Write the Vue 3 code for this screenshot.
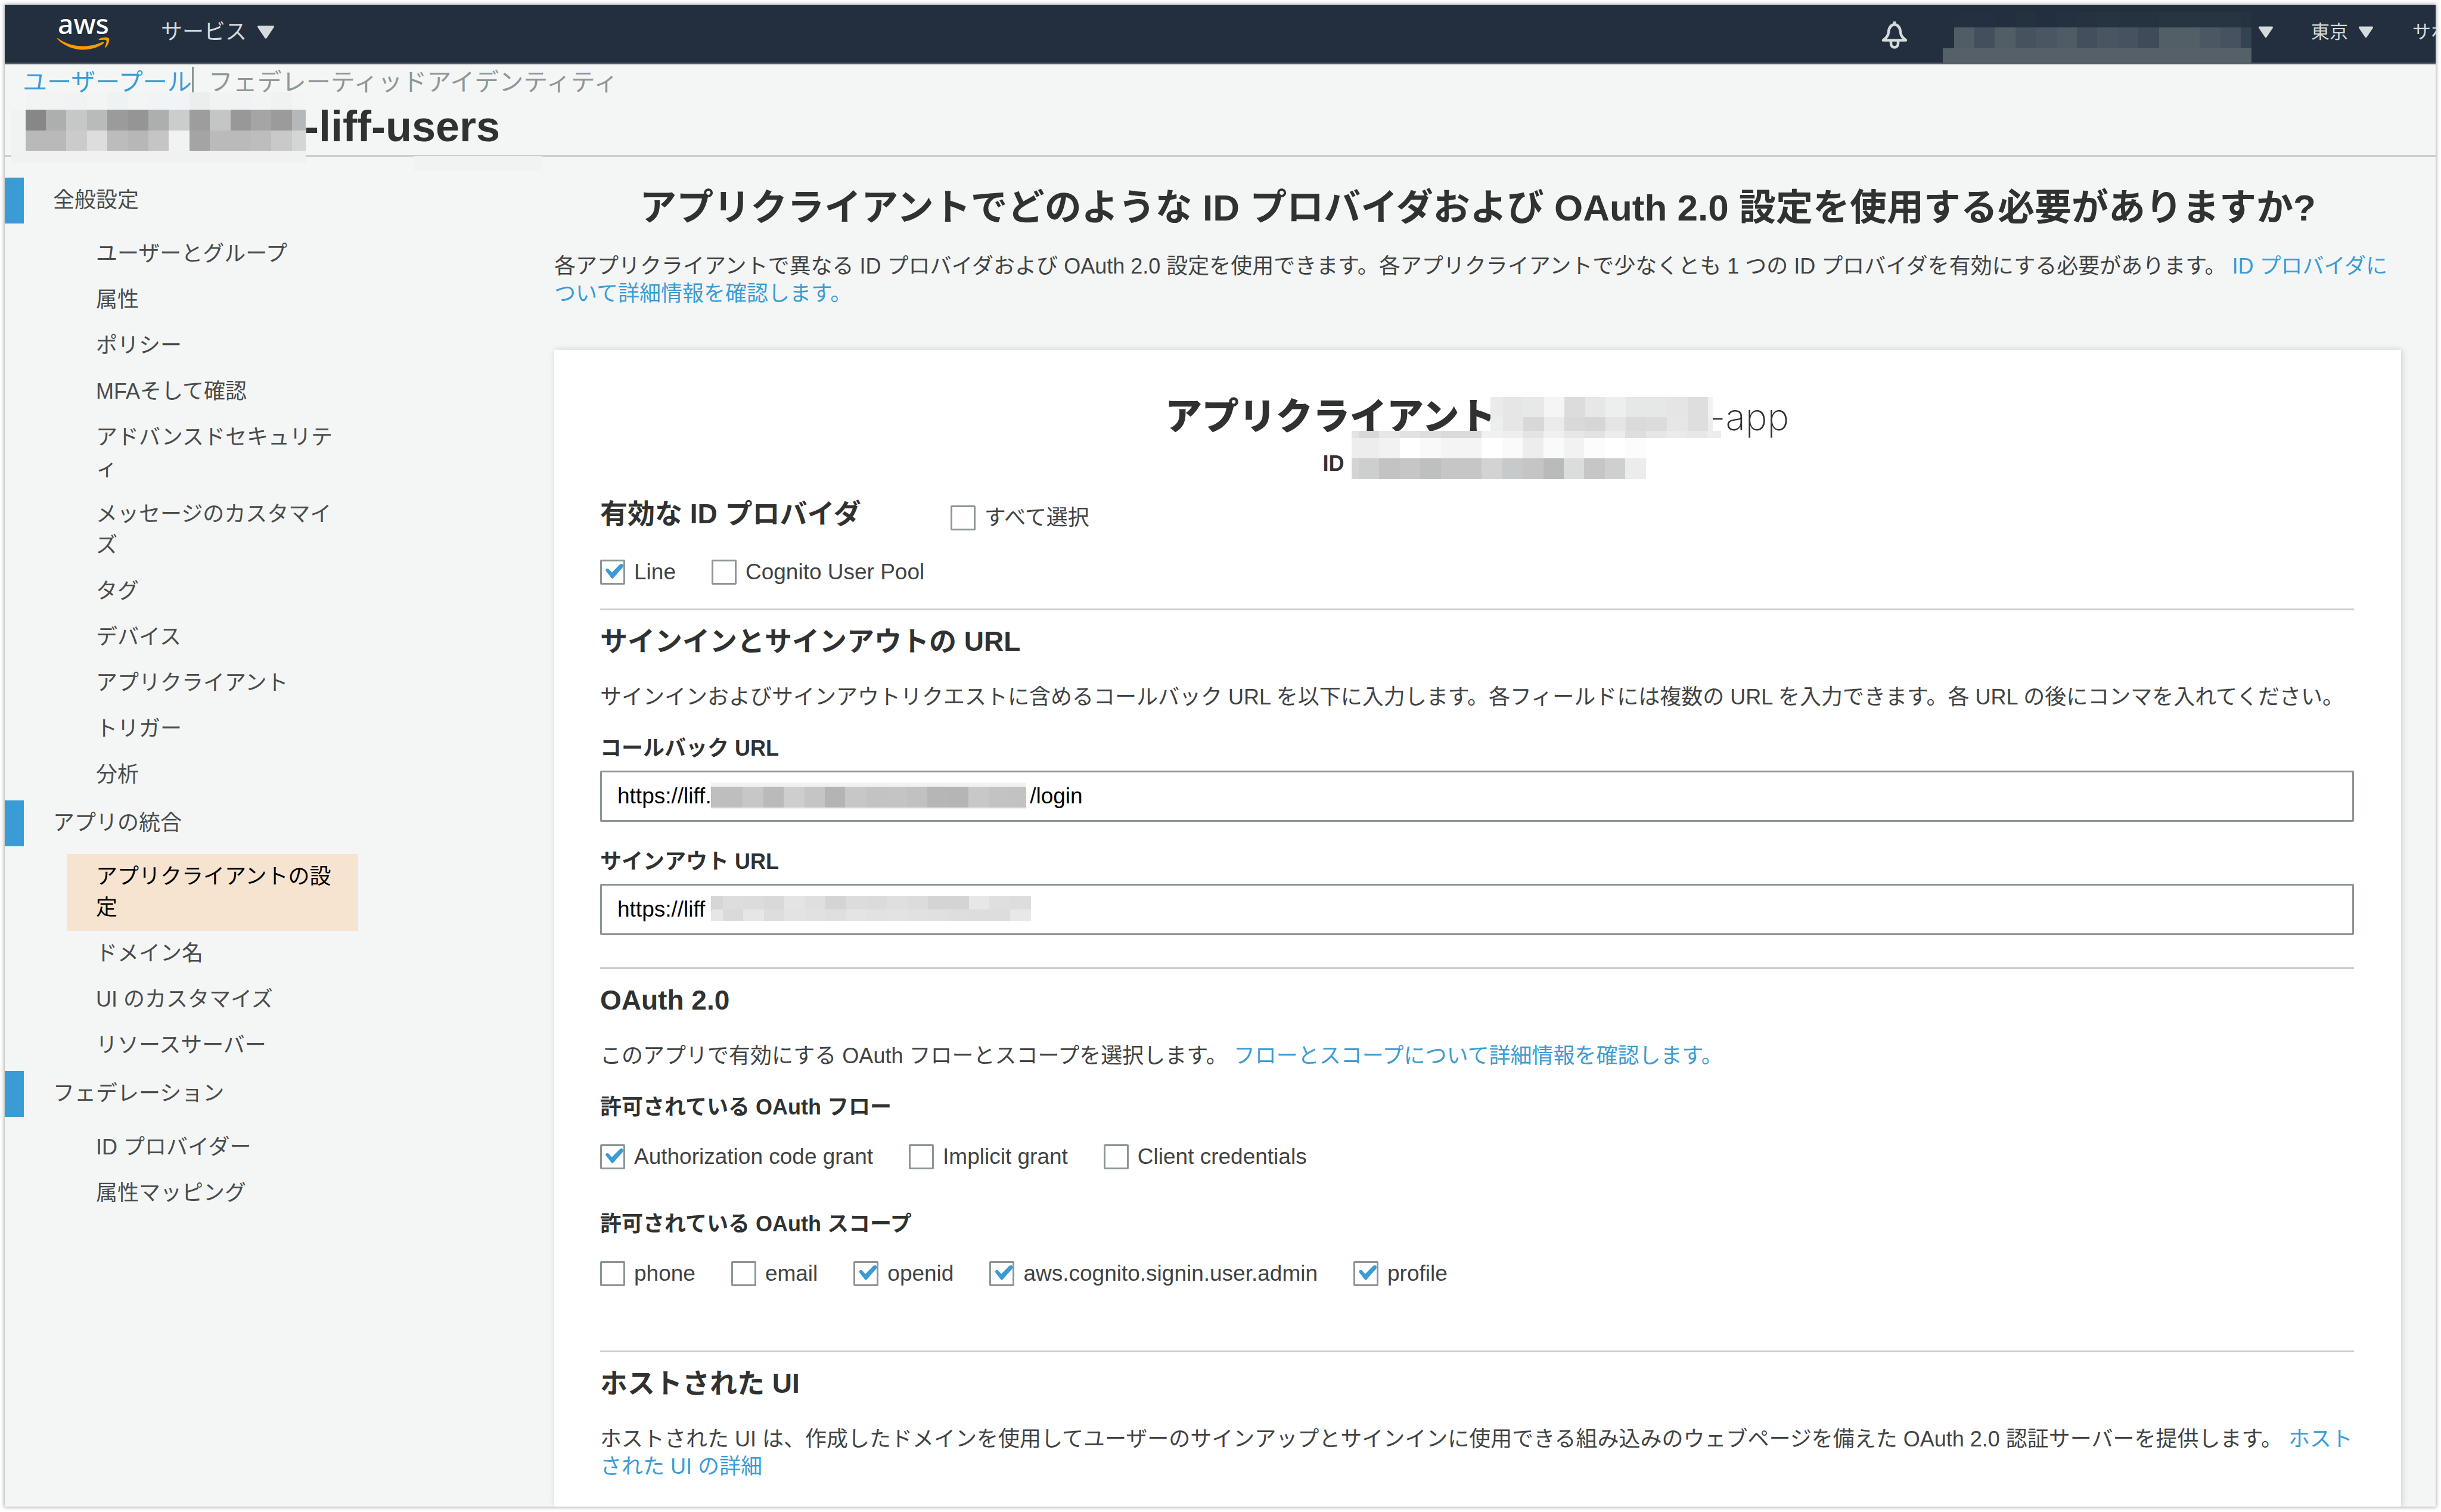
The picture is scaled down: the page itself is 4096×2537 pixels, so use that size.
<script setup>
import { ref } from 'vue'

const PITCH = 34.4

// One row of redaction tiles: the first tile may be narrow, the rest share a pitch.
function tiles(y, height, start, end, first, colors) {
  return colors.map((color, i) => {
    const x = i === 0 ? start : Math.round(start + first + PITCH * (i - 1))
    const next = i === colors.length - 1 ? end : Math.round(start + first + PITCH * i)
    return { x, y, width: next - x, height, color }
  })
}

const poolMask = [
  ...tiles(0, 29, 24, 494, 34, ['#f2f4f3', '#f2f4f3', '#eff3f4', '#f3f4f4', '#edf2f3', '#f3f5f5', '#f0f4f6', '#f0f4f6', '#eceeed', '#f1f3f3', '#f1f2f4', '#f2f4f3', '#f0f2f1', '#f3f5f4']),
  ...tiles(29, 69, 0, 24, 24, ['#f1f3f3']),
  ...tiles(29, 35, 24, 494, 34, ['#868786', '#adaeae', '#c6c7c7', '#b9baba', '#9a9b9a', '#949594', '#adaeae', '#cbcccc', '#9c9d9c', '#c4c5c5', '#979897', '#a4a5a4', '#9a9b9a', '#b5b8ba']),
  ...tiles(64, 34, 24, 494, 34, ['#b8b9b8', '#b8b9b8', '#cacbca', '#dcdddc', '#bbbcbb', '#b6b7b6', '#c4c5c4', '#f1f3f2', '#a3a4a3', '#b9bab9', '#b9bab9', '#bcbdbc', '#c8c9c8', '#d4d6d5']),
  ...tiles(98, 20, 0, 494, 494, ['#f0f2f1']),
]

const accountMask = [
  ...tiles(0, 26, 19, 518, 34, ['#24303f', '#24303f', '#232f3e', '#24313f', '#232f3e', '#243140', '#263240', '#263341', '#253240', '#253240', '#273441', '#273441', '#273441', '#273441', '#263240']),
  ...tiles(26, 35, 19, 518, 34, ['#515d66', '#434f5d', '#525e66', '#47525f', '#4b5662', '#4f5b65', '#434f5d', '#4a5562', '#475260', '#3f4b59', '#525f67', '#525f67', '#4b5863', '#465260', '#344351']),
  ...tiles(61, 24, 0, 518, 518, ['#566069']),
]

const clientMask = [
  ...tiles(0, 34, 233, 606, 21, ['#eaebea', '#e6e6e6', '#e7e9e8', '#f5f5f5', '#dcdcdc', '#e7e7e7', '#ecefee', '#e6e7e7', '#e6e7e7', '#e5e5e5', '#dedede', '#f2f2f2']),
  ...tiles(34, 23, 233, 606, 21, ['#ecefee', '#e6e6e6', '#d8d8d8', '#ebebeb', '#d9d9d9', '#d6d6d6', '#e5e5e5', '#dadada', '#dcdcdc', '#e6e6e6', '#dedede', '#eceeed']),
  ...tiles(57, 12, 0, 620, 12, ['#e4e4e4', '#d8d8d8', '#e7e7e7', '#e2e2e2', '#dedede', '#dadada', '#dadada', '#f0f2f1', '#eeeeee', '#e4e4e4', '#f0f0f0', '#e7e7e7', '#e2e2e2', '#ececec', '#dedede', '#e6e6e6', '#ebebeb', '#e7e7e7', '#eceeed']),
  ...tiles(69, 34, 0, 494, 12, ['#ededed', '#ededed', '#f2f2f2', '#ffffff', '#f9f9f9', '#f4f4f4', '#f4f4f4', '#ffffff', '#fafafa', '#ededed', '#f9fbfa', '#f2f2f2', '#fcfcfc', '#ffffff', '#fcfcfc']),
  ...tiles(103, 35, 0, 494, 12, ['#d4d4d4', '#cccfce', '#c3c3c3', '#c6c6c6', '#bdc0bf', '#c6c6c6', '#c6c6c6', '#d3d3d3', '#c7caca', '#c5c5c5', '#b9bbba', '#dbdddc', '#c6c6c6', '#cdd0cf', '#ececec']),
]

const callbackMask = [
  ...tiles(0, 7, 0, 529, 529, ['#f1f3f2']),
  ...tiles(7, 35, 0, 529, 19, ['#bfbfbf', '#bebebe', '#c7c7c7', '#bababa', '#cecece', '#c5c5c5', '#b4b4b4', '#c7c7c7', '#c3c3c3', '#c4c4c4', '#c1c1c1', '#b6b6b6', '#b5b5b5', '#c8c8c8', '#c3c3c3', '#c2c2c2']),
  ...tiles(42, 3, 0, 529, 529, ['#f1f3f2']),
]

const signoutMask = [
  ...tiles(0, 23, 0, 537, 20, ['#d6d6d6', '#dddddd', '#dcdcdc', '#d9d9d9', '#e4e4e4', '#dfdfdf', '#d4d4d4', '#dcdcdc', '#dbdbdb', '#dfdfdf', '#dcdcdc', '#d4d4d4', '#d4d4d4', '#e7e7e7', '#dfdfdf', '#dddddd']),
  ...tiles(23, 19, 0, 537, 20, ['#e6e6e6', '#dadada', '#e6e6e6', '#dddddd', '#e3e3e3', '#e1e1e1', '#dfdfdf', '#e4e4e4', '#e2e2e2', '#e3e3e3', '#e1e1e1', '#e0e0e0', '#dedede', '#dddddd', '#dddddd', '#e8e8e8']),
]

const nav = [
  {
    title: '全般設定',
    items: ['ユーザーとグループ', '属性', 'ポリシー', 'MFAそして確認', 'アドバンスドセキュリティ', 'メッセージのカスタマイズ', 'タグ', 'デバイス', 'アプリクライアント', 'トリガー', '分析'],
  },
  {
    title: 'アプリの統合',
    items: ['アプリクライアントの設定', 'ドメイン名', 'UI のカスタマイズ', 'リソースサーバー'],
  },
  { title: 'フェデレーション', items: ['ID プロバイダー', '属性マッピング'] },
]
const current = 'アプリクライアントの設定'

const selectAll = ref(false)
const providers = ref([
  { id: 'line', label: 'Line', on: true },
  { id: 'cognito', label: 'Cognito User Pool', on: false },
])
const flows = ref([
  { id: 'code', label: 'Authorization code grant', on: true },
  { id: 'implicit', label: 'Implicit grant', on: false },
  { id: 'client', label: 'Client credentials', on: false },
])
const scopes = ref([
  { id: 'phone', label: 'phone', on: false },
  { id: 'email', label: 'email', on: false },
  { id: 'openid', label: 'openid', on: true },
  { id: 'admin', label: 'aws.cognito.signin.user.admin', on: true },
  { id: 'profile', label: 'profile', on: true },
])

const callbackUrl = ref('https://liff.' + '\u00a0'.repeat(52) + '/login')
const signoutUrl = ref('https://liff')
</script>

<template>
  <div class="page" lang="ja">
    <div class="window">
      <header class="topbar">
        <a class="logo" href="#" aria-label="aws">
          <span class="logo-text">aws</span>
          <svg class="logo-smile" viewBox="0 0 88 22" aria-hidden="true">
            <path d="M1 2C13 11 28 15.500 43 15.500C54 15.500 66 13 76 8.500C78 7.800 79.500 9.500 77.500 11C68 18 55 21.500 43 21.500C27 21.500 12 15 .8 4C-.2 2.800 0 1.500 1 2Z" fill="#ff9900" />
            <path d="M70 3.500C75 .2 84.500 0 86.600 2.200C88.500 4.500 86 13.500 81.500 17.500C80.500 18.400 79.600 17.900 80 16.800C81.500 13.500 83.500 7.500 82.300 5.800C81 4.200 74.500 4.900 71 5.200C69.500 5.300 69.200 4.200 70 3.500Z" fill="#ff9900" />
          </svg>
        </a>
        <button class="menu services" type="button">
          <span>サービス</span>
          <svg class="caret wide" viewBox="0 0 28 22" aria-hidden="true"><path d="M1 0H27Q28.500 1 27.500 3L15.500 21Q14 22.500 12.500 21L.5 3Q-.5 1 1 0Z" fill="#d5dbdb" /></svg>
        </button>
        <div class="spacer"></div>
        <button class="menu bell" type="button" aria-label="通知">
          <svg viewBox="0 0 46 46" width="46" height="46" aria-hidden="true">
            <path d="M23 5C15.500 6 13.500 11.500 13 18C12.500 24.500 9 27.500 4 31.500H42C37 27.500 33.500 24.500 33 18C32.500 11.500 30.500 6 23 5Z" fill="none" stroke="#d5dbdb" stroke-width="4.500" stroke-linejoin="round" />
            <path d="M23 0V6M17 33V37C17 45.500 29 45.500 29 37V33" fill="none" stroke="#d5dbdb" stroke-width="4.500" />
          </svg>
        </button>
        <button class="menu account" type="button" aria-label="アカウント">
          <svg class="mask account-mask" viewBox="0 0 518 85" width="518" height="85" aria-hidden="true">
            <rect v-for="(t, i) in accountMask" :key="i" :x="t.x" :y="t.y" :width="t.width" :height="t.height" :fill="t.color" />
          </svg>
          <svg class="caret" viewBox="0 0 28 22" aria-hidden="true"><path d="M1 0H27Q28.500 1 27.500 3L15.500 21Q14 22.500 12.500 21L.5 3Q-.5 1 1 0Z" fill="#d5dbdb" /></svg>
        </button>
        <button class="menu region" type="button">
          <span>東京</span>
          <svg class="caret" viewBox="0 0 28 22" aria-hidden="true"><path d="M1 0H27Q28.500 1 27.500 3L15.500 21Q14 22.500 12.500 21L.5 3Q-.5 1 1 0Z" fill="#d5dbdb" /></svg>
        </button>
        <button class="menu support" type="button">サポート</button>
      </header>

      <div class="pool-head">
        <nav class="crumbs">
          <a href="#">ユーザープール</a>
          <a class="muted" href="#">フェデレーティッドアイデンティティ</a>
        </nav>
        <h2 class="pool-name">-liff-users</h2>
        <svg class="mask pool-mask" viewBox="0 0 494 118" width="494" height="118" aria-hidden="true">
          <rect v-for="(t, i) in poolMask" :key="i" :x="t.x" :y="t.y" :width="t.width" :height="t.height" :fill="t.color" />
        </svg>
        <div class="smudge"></div>
      </div>

      <div class="body">
        <aside class="sidebar">
          <section v-for="group in nav" :key="group.title">
            <h3 class="group-title">{{ group.title }}</h3>
            <ul class="group-items">
              <li v-for="item in group.items" :key="item">
                <a href="#" :class="{ current: item === current }">{{ item }}</a>
              </li>
            </ul>
          </section>
        </aside>

        <main class="main">
          <h1>アプリクライアントでどのような ID プロバイダおよび OAuth 2.0 設定を使用する必要がありますか?</h1>
          <p class="intro">各アプリクライアントで異なる ID プロバイダおよび OAuth 2.0 設定を使用できます。各アプリクライアントで少なくとも 1 つの ID プロバイダを有効にする必要があります。 <a href="#">ID プロバイダについて詳細情報を確認します。</a></p>

          <form class="card" @submit.prevent>
            <div class="client">
              <h2 class="client-name"><strong>アプリクライアント</strong><span>n-app</span></h2>
              <div class="client-id">ID</div>
              <svg class="mask client-mask" viewBox="0 0 620 138" width="620" height="138" aria-hidden="true">
                <rect v-for="(t, i) in clientMask" :key="i" :x="t.x" :y="t.y" :width="t.width" :height="t.height" :fill="t.color" />
              </svg>
            </div>

            <section class="block providers">
              <div class="providers-head">
                <h3 class="block-title">有効な ID プロバイダ</h3>
                <label class="check select-all"><input v-model="selectAll" type="checkbox" />すべて選択</label>
              </div>
              <div class="checks provider-checks">
                <label v-for="p in providers" :key="p.id" class="check"><input v-model="p.on" type="checkbox" />{{ p.label }}</label>
              </div>
            </section>

            <section class="block urls">
              <h3 class="block-title">サインインとサインアウトの URL</h3>
              <p>サインインおよびサインアウトリクエストに含めるコールバック URL を以下に入力します。各フィールドには複数の URL を入力できます。各 URL の後にコンマを入れてください。</p>
              <label class="caption" for="callback">コールバック URL</label>
              <div class="field">
                <input id="callback" v-model="callbackUrl" type="text" />
                <svg class="mask field-mask" viewBox="0 0 529 45" width="529" height="45" aria-hidden="true">
                  <rect v-for="(t, i) in callbackMask" :key="i" :x="t.x" :y="t.y" :width="t.width" :height="t.height" :fill="t.color" />
                </svg>
              </div>
              <label class="caption second" for="signout">サインアウト URL</label>
              <div class="field">
                <input id="signout" v-model="signoutUrl" type="text" />
                <svg class="mask field-mask" viewBox="0 0 537 42" width="537" height="42" aria-hidden="true">
                  <rect v-for="(t, i) in signoutMask" :key="i" :x="t.x" :y="t.y" :width="t.width" :height="t.height" :fill="t.color" />
                </svg>
              </div>
            </section>

            <section class="block oauth">
              <h3 class="block-title">OAuth 2.0</h3>
              <p>このアプリで有効にする OAuth フローとスコープを選択します。 <a href="#">フローとスコープについて詳細情報を確認します。</a></p>
              <h4 class="caption">許可されている OAuth フロー</h4>
              <div class="checks">
                <label v-for="f in flows" :key="f.id" class="check"><input v-model="f.on" type="checkbox" />{{ f.label }}</label>
              </div>
              <h4 class="caption scopes">許可されている OAuth スコープ</h4>
              <div class="checks">
                <label v-for="s in scopes" :key="s.id" class="check"><input v-model="s.on" type="checkbox" />{{ s.label }}</label>
              </div>
            </section>

            <section class="block">
              <h3 class="block-title">ホストされた UI</h3>
              <p>ホストされた UI は、作成したドメインを使用してユーザーのサインアップとサインインに使用できる組み込みのウェブページを備えた OAuth 2.0 認証サーバーを提供します。 <a href="#">ホストされた UI の詳細</a></p>
            </section>
          </form>
        </main>
      </div>
    </div>
  </div>
</template>

<style>
body {
  background: #fff;
}
</style>

<style scoped>
* {
  box-sizing: border-box;
}
.page {
  height: 100vh;
  padding: 8px 9px 9px 8px;
  font-family: "Liberation Sans", "Noto Sans CJK JP", sans-serif;
  font-size: 36px;
  line-height: 46px;
  color: #414342;
}
.window {
  height: 100%;
  overflow: hidden;
  display: flex;
  flex-direction: column;
  background: #f4f6f6;
  box-shadow: 0 0 6px 1px rgba(0, 0, 0, 0.35);
}
h1,
h2,
h3,
h4,
p,
ul {
  margin: 0;
  padding: 0;
  list-style: none;
}
a {
  color: #3c9cd4;
  text-decoration: none;
}
.mask {
  position: absolute;
  display: block;
  shape-rendering: crispEdges;
}

/* top bar */
.topbar {
  position: relative;
  flex: none;
  display: flex;
  height: 100px;
  padding: 0 0 6px 88px;
  overflow: hidden;
  background: #232f3e;
  border-bottom: 3px solid #545b64;
}
.logo {
  display: flex;
  flex-direction: column;
  width: 88px;
  padding-top: 8px;
  color: #fff;
}
.logo-text {
  font-family: "Noto Sans", sans-serif;
  font-weight: 500;
  font-size: 46px;
  line-height: 46px;
  text-align: center;
}
.logo-smile {
  width: 88px;
  height: 22px;
}
.menu {
  display: flex;
  align-items: center;
  padding: 0;
  border: 0;
  background: none;
  font: inherit;
  font-size: 31px;
  color: #d5dbdb;
  white-space: nowrap;
}
.services {
  gap: 18px;
  margin-left: 86px;
  font-size: 36px;
}
.caret {
  width: 24px;
  height: 22px;
  flex: none;
}
.caret.wide {
  width: 28px;
}
.spacer {
  flex: 1;
}
.bell {
  width: 46px;
  padding-top: 10px;
}
.account {
  width: 554px;
  margin-left: 58px;
  justify-content: flex-end;
}
.account-mask {
  top: 12px;
  margin-right: 36px;
}
.region {
  gap: 18px;
  margin-left: 64px;
}
.support {
  width: 39px;
  margin-left: 66px;
  overflow: hidden;
}

/* user pool heading */
.pool-head {
  position: relative;
  flex: none;
  padding-bottom: 4px;
  border-bottom: 3px solid #cbcdcc;
}
.crumbs {
  display: flex;
  padding-left: 30px;
  font-size: 41px;
  line-height: 60px;
}
.crumbs a + a {
  position: relative;
  padding-left: 28px;
}
.crumbs a + a::before {
  content: "";
  position: absolute;
  left: 0;
  top: 4px;
  width: 3px;
  height: 43px;
  background: #879596;
}
.crumbs .muted {
  color: #8f9798;
}
.pool-name {
  padding-left: 503px;
  font-size: 72px;
  line-height: 88px;
  color: #303231;
}
.pool-mask {
  left: 11px;
  top: 47px;
}
.smudge {
  position: absolute;
  left: 686px;
  top: 154px;
  width: 215px;
  height: 25px;
  background: #f1f3f2;
}

/* columns */
.body {
  flex: 1;
  min-height: 0;
  display: grid;
  grid-template-columns: 922px minmax(0, 1fr);
}
.sidebar {
  padding-top: 35px;
  line-height: 52px;
}
.group-title {
  padding: 12px 0 13px 49px;
  border-left: 32px solid #3b9bd5;
  font-size: 36px;
  font-weight: 400;
  line-height: 52px;
  color: #4a4c4b;
}
.group-items {
  width: 489px;
  margin-left: 104px;
  padding: 13px 0 4px;
}
.group-items a {
  display: block;
  padding: 12px 24px 13px 49px;
  color: #4a4c4b;
}
.group-items .current {
  background: #f7e4d0;
  color: #000;
}

.main {
  display: flex;
  flex-direction: column;
  padding: 50px 58px 0 0;
}
h1 {
  font-size: 62px;
  line-height: 72px;
  text-align: center;
  color: #303231;
}
.intro {
  margin-top: 39px;
}

/* card */
.card {
  flex: 1;
  margin-top: 71px;
  padding: 77px 79px 0 77px;
  background: #fff;
  border-radius: 3px;
  box-shadow: 2px 0 12px rgba(0, 20, 20, 0.16);
}
.client {
  position: relative;
}
.client-name {
  display: flex;
  justify-content: center;
  gap: 321px;
  font-size: 62px;
  line-height: 72px;
  color: #303231;
}
.client-name span {
  font-family: Inter, sans-serif;
  font-weight: 200;
}
.client-id {
  width: 518px;
  margin: 19px auto 0;
  font-weight: 700;
  color: #303231;
}
.client-mask {
  left: calc(50% - 211px);
  top: 2px;
}
.block + .block {
  border-top: 3px solid #cccccc;
  padding-top: 24px;
}
.block-title {
  font-size: 46px;
  line-height: 56px;
  color: #303231;
}
.block p {
  margin-top: 43px;
}
.providers {
  margin-top: 33px;
  padding-bottom: 40px;
}
.providers-head {
  display: flex;
  align-items: flex-end;
  gap: 150px;
}
.checks {
  display: flex;
  gap: 60px;
  margin-top: 39px;
}
.provider-checks {
  margin-top: 49px;
}
.check {
  display: flex;
  align-items: center;
  gap: 15px;
  height: 42px;
  font-size: 37px;
}
.select-all {
  font-size: 36px;
}
.check input {
  appearance: none;
  position: relative;
  width: 42px;
  height: 42px;
  margin: 0;
  border: 3px solid #8d9596;
  border-radius: 2px;
  background: #fff;
}
.check input:checked::before {
  content: "";
  position: absolute;
  left: 6px;
  top: 4px;
  width: 30px;
  height: 25px;
  background: #3b9bd5;
  clip-path: polygon(0 44%, 5% 33%, 15% 32%, 36% 58%, 82% 2%, 93% 0, 100% 10%, 98% 22%, 46% 93%, 39% 100%, 32% 94%);
}
.caption {
  display: block;
  margin-top: 40px;
  font-size: 36px;
  font-weight: 700;
  line-height: 46px;
  color: #303231;
}
.caption.second {
  margin-top: 44px;
}
.caption.scopes {
  margin-top: 69px;
}
.field {
  position: relative;
  margin-top: 14px;
}
.field input {
  display: block;
  width: 100%;
  height: 86px;
  padding: 0 26px;
  border: 3px solid #8d9596;
  border-radius: 2px;
  background: #fff;
  font: inherit;
  font-size: 37px;
  color: #000;
}
.field-mask {
  left: 186px;
  top: 20px;
}
.urls {
  padding-bottom: 54px;
}
.oauth {
  padding-bottom: 108px;
}
</style>
